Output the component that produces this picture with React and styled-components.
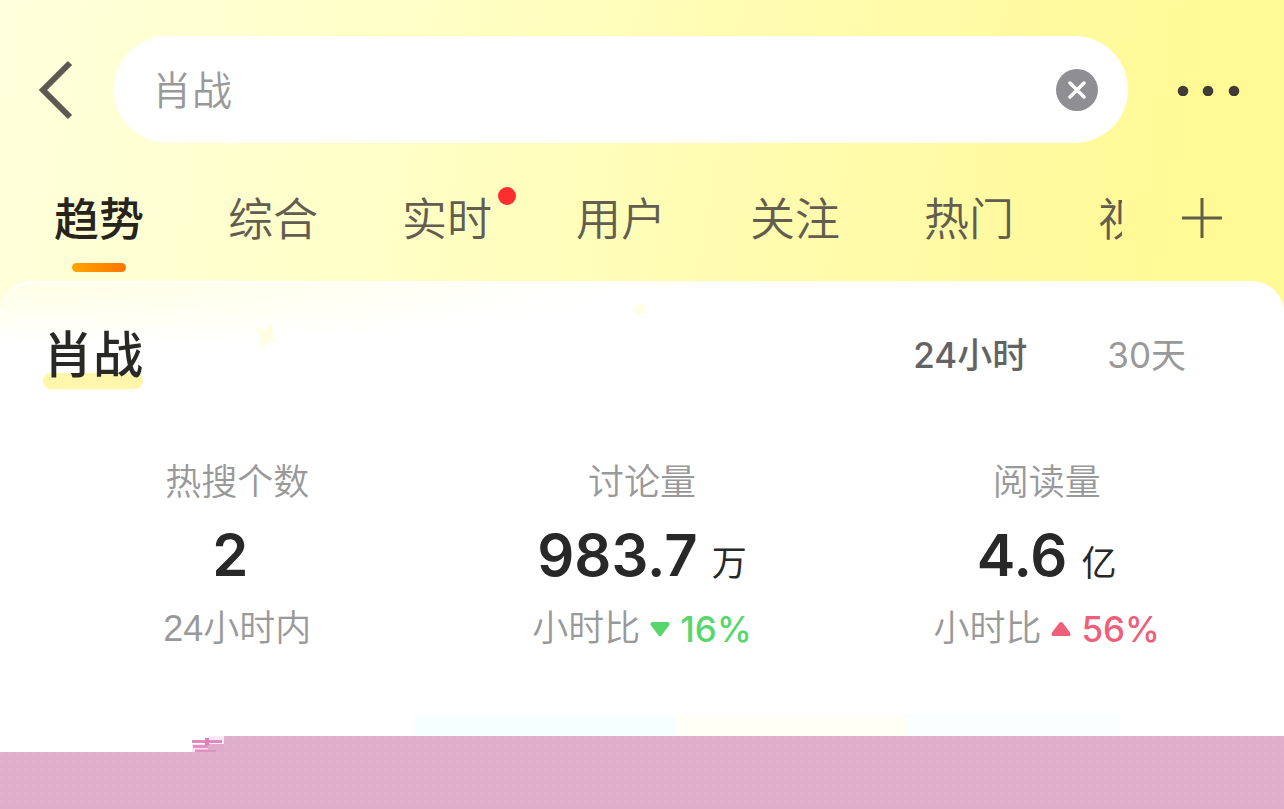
import React, { useState } from "react";
import styled, { createGlobalStyle } from "styled-components";

const tabs = [
  { name: "趋势" },
  { name: "综合" },
  { name: "实时", dot: true },
  { name: "用户" },
  { name: "关注" },
  { name: "热门" },
  { name: "视频" },
];

const stats = [
  { label: "热搜个数", value: "2", note: "24小时内" },
  { label: "讨论量", value: "983.7", unit: "万", note: "小时比", change: "16%" },
  { label: "阅读量", value: "4.6", unit: "亿", note: "小时比", change: "56%", up: true },
];

const ranges = ["24小时", "30天"];

export default function App() {
  const [active, setActive] = useState("趋势");
  const [range, setRange] = useState("24小时");
  const [keyword, setKeyword] = useState("肖战");

  return (
    <Page>
      <GlobalStyle />
      <Header>
        <BackButton type="button" aria-label="返回">
          <svg width="36" height="60" viewBox="0 0 36 60" fill="none" stroke="#5c5852" strokeWidth="6">
            <path d="M33 3L6 30L33 57" />
          </svg>
        </BackButton>
        <SearchBox>
          <SearchInput
            type="text"
            aria-label="搜索"
            value={keyword}
            onChange={(e) => setKeyword(e.target.value)}
          />
          <ClearButton type="button" aria-label="清除" onClick={() => setKeyword("")}>
            <svg width="18" height="18" viewBox="0 0 18 18" stroke="#fff" strokeWidth="3.500" strokeLinecap="round">
              <path d="M2 2L16 16M16 2L2 16" />
            </svg>
          </ClearButton>
        </SearchBox>
        <MoreButton type="button" aria-label="更多">
          <svg width="64" height="12" viewBox="0 0 64 12" fill="#403c35">
            <circle cx="7" cy="7" r="5.300" />
            <circle cx="32" cy="7" r="5.300" />
            <circle cx="58" cy="7" r="5.300" />
          </svg>
        </MoreButton>
      </Header>

      <TabBar>
        <TabList>
          {tabs.map((tab) => (
            <Tab
              key={tab.name}
              type="button"
              $active={tab.name === active}
              onClick={() => setActive(tab.name)}
            >
              {tab.name}
              {tab.dot && <Dot />}
            </Tab>
          ))}
        </TabList>
        <AddButton type="button" aria-label="添加">
          <svg width="40" height="40" viewBox="0 0 40 40" stroke="#625d48" strokeWidth="3">
            <path d="M20 0V40M0 20H40" />
          </svg>
        </AddButton>
      </TabBar>

      <Card>
        <Star $left="254px" $top="38px" width="28" height="28" viewBox="0 0 28 28" fill="#fffee0">
          <path d="M17 0L19 9L18 15L27 21L15 19L4 27L7 16L1 6L12 8Z" />
        </Star>
        <Star $left="632px" $top="18px" width="16" height="16" viewBox="0 0 28 28" fill="#ffffe0">
          <path d="M22 0L20 10L28 20L15 19L4 27L7 15L1 7L12 7Z" />
        </Star>
        <CardHead>
          <Title>肖战</Title>
          <Range>
            {ranges.map((name) => (
              <RangeButton
                key={name}
                type="button"
                $active={name === range}
                onClick={() => setRange(name)}
              >
                {name}
              </RangeButton>
            ))}
          </Range>
        </CardHead>
        <Stats>
          {stats.map((item) => (
            <Stat key={item.label}>
              <Label>{item.label}</Label>
              <Value>
                {item.value}
                <Unit>{item.unit}</Unit>
              </Value>
              <Note>
                {item.note}
                {item.change && (
                  <Change $up={item.up}>
                    <Arrow up={item.up} />
                    {item.change}
                  </Change>
                )}
              </Note>
            </Stat>
          ))}
        </Stats>
        <Bands>
          <Band />
          <Band $color="#f5ffff" />
          <Band $color="#fffff6" />
          <Band $color="#f9feff" />
          <Band />
        </Bands>
      </Card>

      <Step>
        <StepMark width="32" height="16" viewBox="0 0 32 16">
          <path d="M16 0H32V8H16Z" fill="#fdeaf8" />
          <path d="M0 8H16V16H0Z" fill="#fbe3f1" />
          <path d="M16 8H32V16H16Z" fill="#dfaacb" />
          <path d="M0 5.500H30" stroke="#dc8dbd" strokeWidth="3" />
          <path d="M1 10.500H16M3 15H16" stroke="#e58fc0" strokeWidth="3" />
          <path d="M15 2V9" stroke="#e07fb8" strokeWidth="4" />
          <path d="M16 15H24" stroke="#d796bf" strokeWidth="2" />
        </StepMark>
        <Pink />
      </Step>
      <Pink />
    </Page>
  );
}

function Arrow({ up }) {
  return (
    <svg width="20" height="16" viewBox="0 0 20 16" fill="currentColor">
      {up ? (
        <path d="M8.300 1.800Q10 0 11.700 1.800L19 11.500Q20.500 15 17.500 15H2.500Q-.5 15 1 11.500Z" />
      ) : (
        <path d="M8.300 14.200Q10 16 11.700 14.200L19 4.500Q20.500 1 17.500 1H2.500Q-.5 1 1 4.500Z" />
      )}
    </svg>
  );
}

const GlobalStyle = createGlobalStyle`
  * {
    box-sizing: border-box;
  }
  body {
    margin: 0;
    font-family: Inter, "Noto Sans CJK SC", sans-serif;
  }
  button {
    padding: 0;
    border: 0;
    background: none;
    font-family: inherit;
    cursor: pointer;
  }
  svg {
    display: block;
  }
`;

const Page = styled.div`
  display: flex;
  flex-direction: column;
  min-height: 100vh;
  background: linear-gradient(100deg, #ffffdc 0%, #ffffc6 30%, #fffbaa 62%, #fff996 85%);
`;

const Header = styled.header`
  display: flex;
  align-items: center;
  padding: 36px 44px 0 37px;
`;

const BackButton = styled.button`
  width: 77px;
`;

const SearchBox = styled.div`
  display: flex;
  flex: 1;
  align-items: center;
  height: 107px;
  padding: 0 30px 0 38px;
  border-radius: 54px;
  background: #fff;
`;

const SearchInput = styled.input`
  flex: 1;
  min-width: 0;
  height: 64px;
  padding: 0 0 4px;
  border: 0;
  outline: none;
  background: none;
  color: #999;
  font-family: "Noto Sans CJK SC", sans-serif;
  font-size: 40px;
  font-weight: 350;
`;

const ClearButton = styled.button`
  display: flex;
  align-items: center;
  justify-content: center;
  width: 42px;
  height: 42px;
  border-radius: 50%;
  background: #8e8e93;
`;

const MoreButton = styled.button`
  margin-left: 48px;
`;

const TabBar = styled.nav`
  display: flex;
  justify-content: space-between;
  height: 138px;
  padding: 42px 62px 0 54px;
`;

const TabList = styled.div`
  display: flex;
  flex: 1;
  gap: 84px;
  margin-right: 60px;
  overflow: hidden;
`;

const Tab = styled.button`
  position: relative;
  flex: none;
  height: 87px;
  padding-bottom: 17px;
  color: ${(props) => (props.$active ? "#26241c" : "#625d50")};
  font-size: 45px;
  font-weight: ${(props) => (props.$active ? 500 : 350)};
  line-height: 70px;
  &::after {
    content: "";
    position: absolute;
    left: 50%;
    bottom: 0;
    width: 54px;
    height: 9px;
    margin-left: -27px;
    border-radius: 5px;
    background: ${(props) =>
      props.$active ? "linear-gradient(90deg, #ffa600, #ff7400)" : "none"};
  }
`;

const Dot = styled.span`
  position: absolute;
  top: 2px;
  right: -24px;
  width: 18px;
  height: 18px;
  border-radius: 50%;
  background: #ff2d2d;
`;

const AddButton = styled.button`
  height: 66px;
`;

const Card = styled.main`
  position: relative;
  border-top: 3px solid #fff;
  border-radius: 32px 32px 0 0;
  background: radial-gradient(ellipse 560px 60px at 60px 0, #ffffe6, #fff) #fff;
`;

const Star = styled.svg`
  position: absolute;
  left: ${(props) => props.$left};
  top: ${(props) => props.$top};
`;

const CardHead = styled.div`
  display: flex;
  align-items: center;
  justify-content: space-between;
  padding: 36px 98px 0 43px;
`;

const Title = styled.h1`
  position: relative;
  z-index: 0;
  margin: 0;
  color: #282824;
  font-size: 50px;
  font-weight: 500;
  line-height: 68px;
  &::before {
    content: "";
    position: absolute;
    z-index: -1;
    left: 0;
    right: 0;
    bottom: 0;
    height: 16px;
    border-radius: 8px;
    background: #fff5ab;
  }
`;

const Range = styled.div`
  display: flex;
  gap: 80px;
`;

const RangeButton = styled.button`
  color: ${(props) => (props.$active ? "#636363" : "#999")};
  font-size: 35px;
  font-weight: ${(props) => (props.$active ? 500 : 400)};
  line-height: 70px;
`;

const Stats = styled.section`
  display: grid;
  grid-template-columns: repeat(3, 1fr);
  padding: 66px 35px 0;
  text-align: center;
`;

const Stat = styled.div`
  display: flex;
  flex-direction: column;
`;

const Label = styled.div`
  color: #999;
  font-size: 36px;
  font-weight: 350;
  line-height: 52px;
`;

const Value = styled.div`
  color: #282828;
  font-size: 58px;
  font-weight: 600;
  line-height: 95px;
`;

const Unit = styled.span`
  margin-left: 14px;
  font-size: 35px;
  font-weight: 400;
  line-height: 1;
`;

const Note = styled.div`
  display: flex;
  align-items: center;
  justify-content: center;
  gap: 10px;
  color: #999;
  font-family: "Liberation Sans", "Noto Sans CJK SC", sans-serif;
  font-size: 36px;
  font-weight: 350;
  line-height: 52px;
`;

const Change = styled.span`
  display: flex;
  align-items: center;
  gap: 10px;
  color: ${(props) => (props.$up ? "#ee5f79" : "#57d76b")};
  font-family: Inter, sans-serif;
  font-size: 35px;
  font-weight: 500;
`;

const Bands = styled.div`
  display: grid;
  grid-template-columns: 415fr 261fr 229fr 215fr 164fr;
  margin-top: 60px;
`;

const Band = styled.div`
  height: 21px;
  background: ${(props) => props.$color || "#fff"};
`;

const Step = styled.div`
  display: flex;
  padding-left: 192px;
  background: #fff;
`;

const StepMark = styled.svg`
  flex: none;
`;

const Pink = styled.div`
  flex: 1;
  background:
    conic-gradient(from 0deg at 1px 1px, transparent 270deg, #eccbdf 0) 1px 1px / 8px 8px,
    #deaecb;
`;
